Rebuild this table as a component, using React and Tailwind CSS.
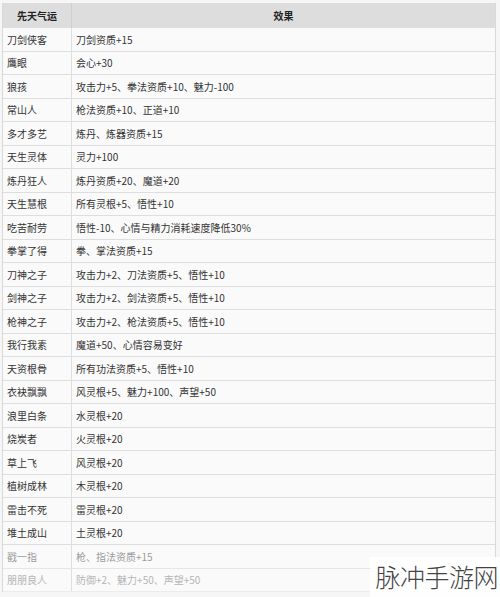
const rows = [
  ["刀剑侠客", "刀剑资质+15"],
  ["鹰眼", "会心+30"],
  ["狼孩", "攻击力+5、拳法资质+10、魅力-100"],
  ["常山人", "枪法资质+10、正道+10"],
  ["多才多艺", "炼丹、炼器资质+15"],
  ["天生灵体", "灵力+100"],
  ["炼丹狂人", "炼丹资质+20、魔道+20"],
  ["天生慧根", "所有灵根+5、悟性+10"],
  ["吃苦耐劳", "悟性-10、心情与精力消耗速度降低30%"],
  ["拳掌了得", "拳、掌法资质+15"],
  ["刀神之子", "攻击力+2、刀法资质+5、悟性+10"],
  ["剑神之子", "攻击力+2、剑法资质+5、悟性+10"],
  ["枪神之子", "攻击力+2、枪法资质+5、悟性+10"],
  ["我行我素", "魔道+50、心情容易变好"],
  ["天资根骨", "所有功法资质+5、悟性+10"],
  ["衣袂飘飘", "风灵根+5、魅力+100、声望+50"],
  ["浪里白条", "水灵根+20"],
  ["烧炭者", "火灵根+20"],
  ["草上飞", "风灵根+20"],
  ["植树成林", "木灵根+20"],
  ["雷击不死", "雷灵根+20"],
  ["堆土成山", "土灵根+20"],
  ["戳一指", "枪、指法资质+15"],
  ["朋朋良人", "防御+2、魅力+50、声望+50"],
];

const App = () => {
  return (
    <div className="relative w-[500px] h-[597px] overflow-hidden bg-[#f6f6f6] pt-[3px] pl-[2px] font-['Noto_Sans_CJK_SC',sans-serif] text-[10px] text-[#333]">
      <div className="w-[494px] border-l border-r border-[#d9d9d9]">
        <div className="grid grid-cols-[69px_1fr] h-[25px] bg-[#dddddd] font-bold text-[#222]">
          <div className="flex items-center justify-center border-r border-[#d0d0d0]">
            先天气运
          </div>
          <div className="flex items-center justify-center">效果</div>
        </div>
        {rows.map((row, i) => (
          <div
            key={i}
            className={
              "grid grid-cols-[69px_1fr] h-[23.5px] bg-[#fafafa] border-b " +
              (i === rows.length - 2
                ? "text-[#9a9a9a] border-[#e6e6e6]"
                : i === rows.length - 1
                ? "text-[#b5b5b5] border-[#ececec]"
                : "border-[#dedede]")
            }
          >
            <div className="flex items-center pl-[4px] border-r border-[#dedede]">
              {row[0]}
            </div>
            <div className="flex items-center pl-[4px]">{row[1]}</div>
          </div>
        ))}
      </div>
      <div className="absolute right-0 bottom-0 w-[130px] h-[40px] bg-white/90 flex items-center justify-end pr-[2px]">
        <span className="text-[25px] font-light text-[#444] tracking-[-0.5px]">
          脉冲手游网
        </span>
      </div>
    </div>
  );
};

export default App;
